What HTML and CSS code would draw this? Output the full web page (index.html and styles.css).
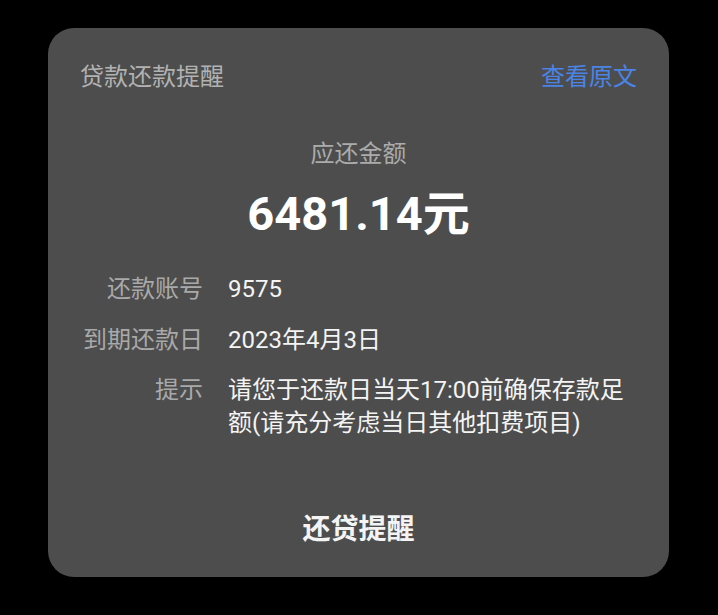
FILE: index.html
```html
<!DOCTYPE html>
<html lang="zh-CN">
<head>
<meta charset="utf-8">
<link rel="stylesheet" href="styles.css">
</head>
<body>
<div class="card">
  <div class="header">
    <span class="title">贷款还款提醒</span>
    <span class="link">查看原文</span>
  </div>
  <div class="subtitle">应还金额</div>
  <div class="amount">6481.14元</div>
  <div class="rows">
    <div class="label">还款账号</div>
    <div class="value">9575</div>
    <div class="label">到期还款日</div>
    <div class="value">2023年4月3日</div>
    <div class="label">提示</div>
    <div class="value">请您于还款日当天17:00前确保存款足额(请充分考虑当日其他扣费项目)</div>
  </div>
  <div class="footer">还贷提醒</div>
</div>
</body>
</html>
```
FILE: styles.css
```css
html, body {
  margin: 0;
  padding: 0;
  background: #000;
}
body {
  font-family: Roboto, "Noto Sans CJK SC", sans-serif;
  width: 718px;
  height: 615px;
  overflow: hidden;
}
.card {
  margin: 28px 0 0 48px;
  width: 621px;
  height: 549px;
  box-sizing: border-box;
  padding: 33px 32px 0;
  background: #4d4d4d;
  border-radius: 26px;
}
.header {
  display: flex;
  justify-content: space-between;
  align-items: center;
  height: 32px;
  line-height: 32px;
  font-size: 24px;
}
.title {
  color: #b2b2b2;
}
.link {
  color: #4a84e6;
}
.subtitle {
  margin-top: 45px;
  text-align: center;
  font-size: 24px;
  line-height: 32px;
  color: #ababab;
}
.amount {
  margin-top: 16px;
  text-align: center;
  font-size: 47px;
  line-height: 56px;
  font-weight: 700;
  color: #fff;
}
.rows {
  margin-top: 31px;
  display: grid;
  grid-template-columns: 123px 1fr;
  column-gap: 25px;
  row-gap: 17.5px;
  font-size: 24px;
  line-height: 33px;
}
.label {
  text-align: right;
  color: #a9a9a9;
}
.value {
  color: #f4f4f4;
}
.footer {
  margin-top: 70px;
  text-align: center;
  font-size: 28px;
  line-height: 40px;
  font-weight: 700;
  color: #f4f4f4;
}
```
